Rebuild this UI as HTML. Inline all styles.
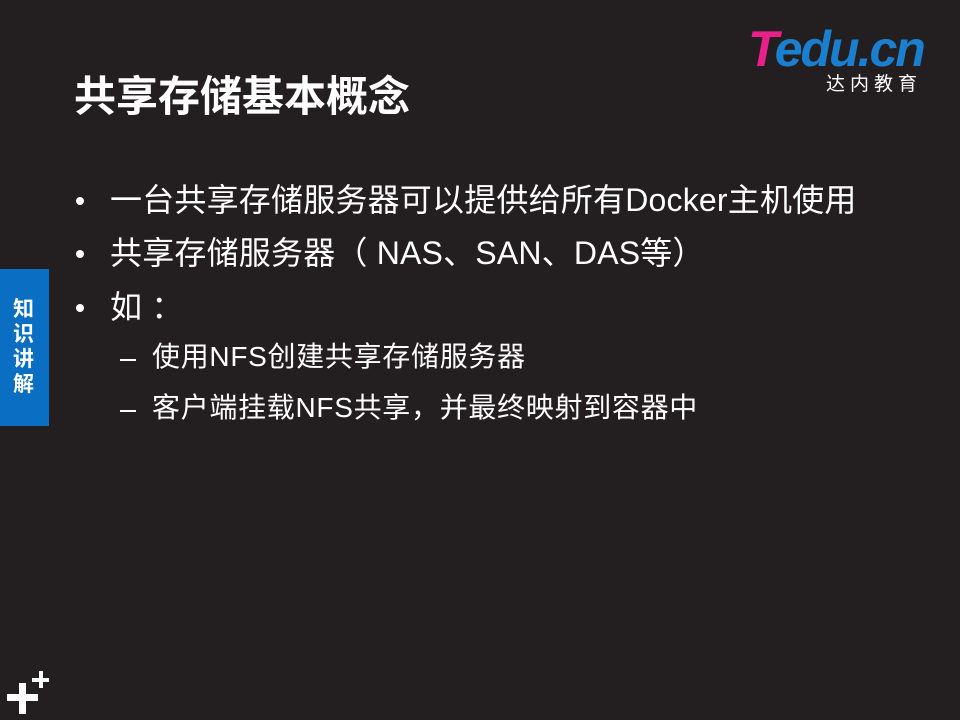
<!DOCTYPE html>
<html><head><meta charset="utf-8"><style>
html,body{margin:0;padding:0}
body{width:960px;height:720px;background:#231f20;position:relative;overflow:hidden;font-family:"Liberation Sans","Noto Sans CJK SC",sans-serif;color:#fff}
.t{position:absolute;white-space:nowrap;line-height:1}
.title{left:74px;top:76px;font-size:42px;font-weight:bold}
.b{font-size:32px;left:110px;letter-spacing:0.2px}
.dot{position:absolute;left:76px;width:8px;height:8px;border-radius:50%;background:#fff}
.s{font-size:28px;left:152px;letter-spacing:0.7px}
.dash{position:absolute;left:120px;width:16px;height:2px;background:#fff}
.tab{position:absolute;left:0;top:269px;width:49px;height:157px;background:#0a6fc2}
.tab div{position:absolute;left:13px;font-size:21px;font-weight:bold;line-height:1}
</style></head><body>
<div class="t title">共享存储基本概念</div>

<div class="t" style="left:748px;top:24px;font-size:50px;font-weight:bold;font-style:italic;letter-spacing:-2px;color:#1b7fd0"><span style="color:#e8208a">T</span>edu.cn</div>
<div class="t" style="left:826px;top:75px;font-size:19px;letter-spacing:5px">达内教育</div>

<div class="dot" style="top:197px"></div>
<div class="t b" style="top:184px">一台共享存储服务器可以提供给所有Docker主机使用</div>
<div class="dot" style="top:250px"></div>
<div class="t b" style="top:237px">共享存储服务器（ NAS、SAN、DAS等）</div>
<div class="dot" style="top:304px"></div>
<div class="t b" style="top:291px">如 ：</div>
<div class="dash" style="top:359px"></div>
<div class="t s" style="top:343px">使用NFS创建共享存储服务器</div>
<div class="dash" style="top:410px"></div>
<div class="t s" style="top:394px">客户端挂载NFS共享，并最终映射到容器中</div>

<div class="tab">
<div style="top:30px">知</div><div style="top:55px">识</div><div style="top:80px">讲</div><div style="top:105px">解</div>
</div>

<svg style="position:absolute;left:0;top:660px" width="60" height="60">
<rect x="7" y="34" width="31" height="7" fill="#fff"/>
<rect x="19" y="23" width="7" height="31" fill="#fff"/>
<rect x="32" y="18" width="17" height="4" fill="#fff"/>
<rect x="39" y="11" width="4" height="17" fill="#fff"/>
</svg>
</body></html>
